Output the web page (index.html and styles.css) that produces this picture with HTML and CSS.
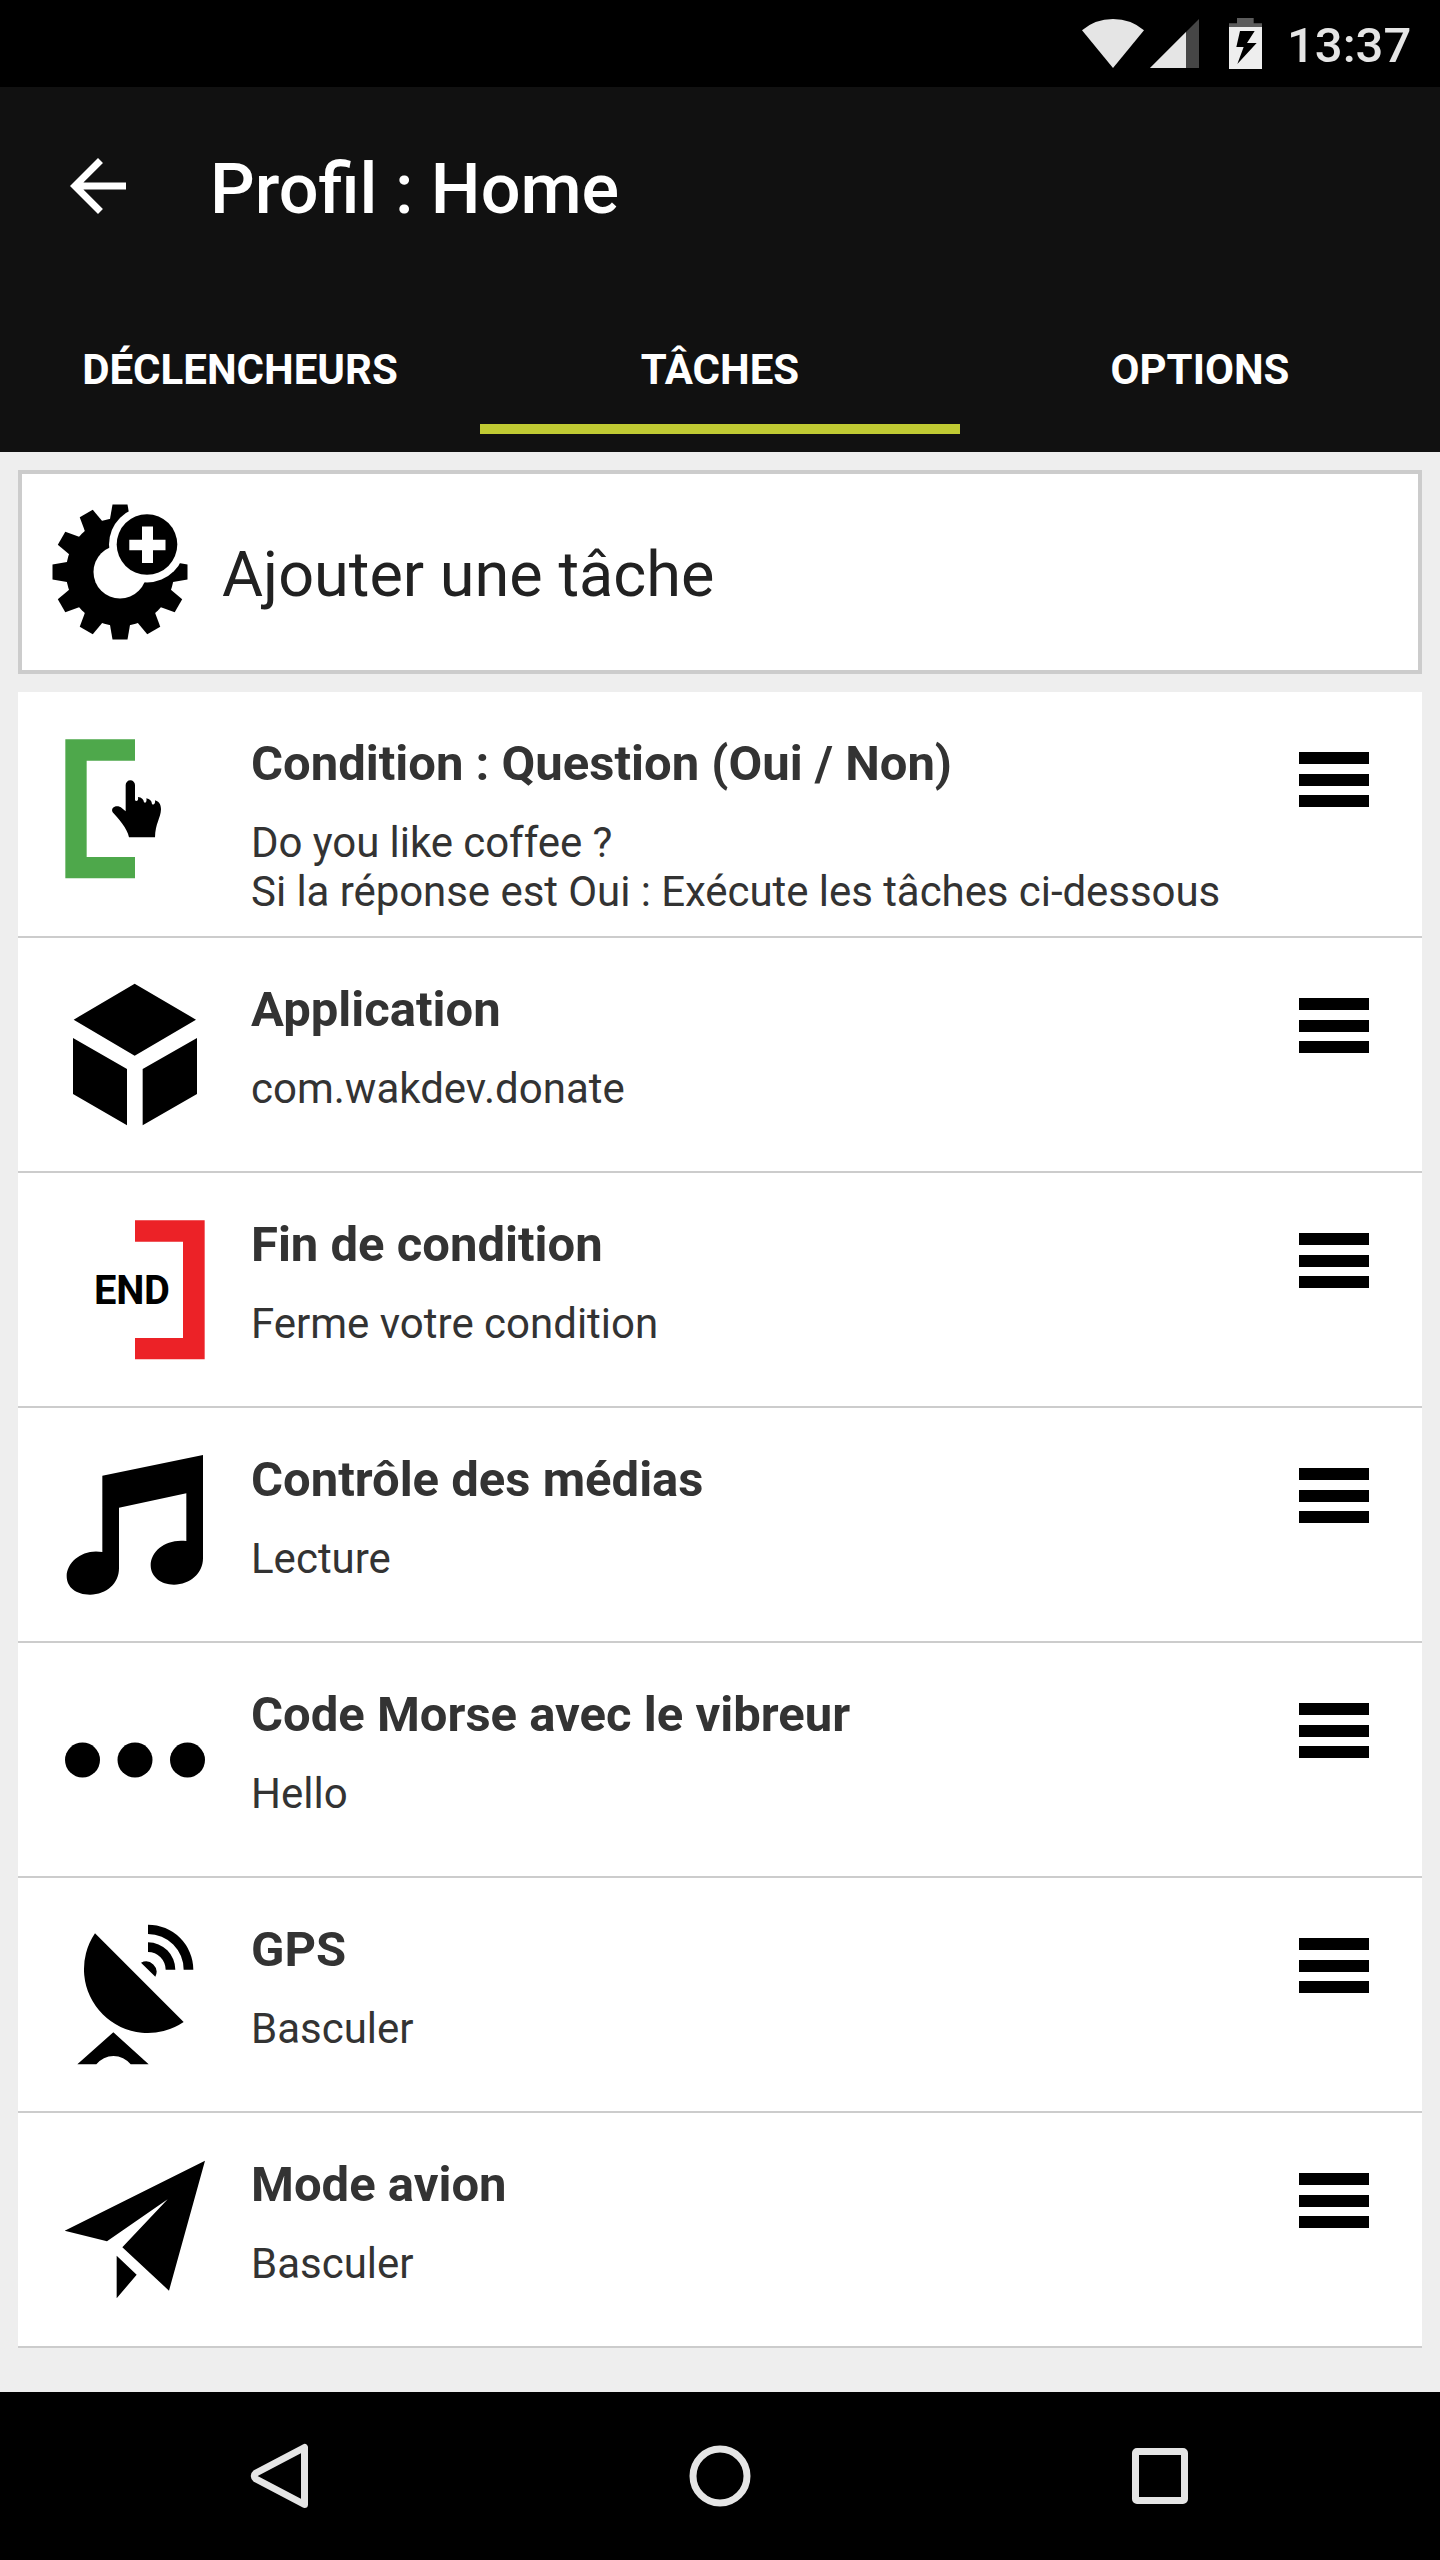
FILE: index.html
```html
<!DOCTYPE html>
<html lang="fr">
<head>
<meta charset="utf-8">
<title>Profil : Home</title>
<link rel="stylesheet" href="styles.css">
</head>
<body>
<div class="status-bar">
  <svg class="wifi" viewBox="66 57 186 147"><path d="M159 204 66 91Q105 57 159 57T252 91Z"/></svg>
  <svg class="signal" viewBox="270 57 147 147"><path class="dim" d="M270 204 417 57V204Z"/><path d="M270 204 378 96V204Z"/></svg>
  <svg class="battery" viewBox="507 54 99 153"><path class="cap" d="M507 81V70H531V54H581V70H606V81Z"/><path class="charge" d="M507 81H606V207H507Z"/><path class="bolt" d="M540 93H584L561 129H590L532 192 551 141H529Z"/></svg>
  <span class="clock">13:37</span>
</div>
<header class="app-bar">
  <div class="toolbar">
    <svg class="back" viewBox="0 0 24 24"><path d="M20 11H7.83l5.59-5.59L12 4l-8 8 8 8 1.41-1.41L7.83 13H20v-2z"/></svg>
    <h1 class="title">Profil : Home</h1>
  </div>
  <nav class="tabs">
    <span class="tab">DÉCLENCHEURS</span>
    <span class="tab active">TÂCHES</span>
    <span class="tab">OPTIONS</span>
  </nav>
</header>
<main class="content">
  <div class="add-card">
    <svg class="gear" viewBox="-70 -70 140 140">
      <defs><path id="tooth" d="M-10-50-10-53-7.5-67.5H7.5L10-53V-50Z"/></defs>
      <circle r="54"/>
      <use href="#tooth"/><use href="#tooth" transform="rotate(30)"/><use href="#tooth" transform="rotate(60)"/>
      <use href="#tooth" transform="rotate(90)"/><use href="#tooth" transform="rotate(120)"/><use href="#tooth" transform="rotate(150)"/>
      <use href="#tooth" transform="rotate(180)"/><use href="#tooth" transform="rotate(210)"/><use href="#tooth" transform="rotate(240)"/>
      <use href="#tooth" transform="rotate(270)"/><use href="#tooth" transform="rotate(300)"/><use href="#tooth" transform="rotate(330)"/>
      <circle class="cut" r="26.5"/>
      <circle class="cut" cx="27" cy="-27.5" r="38"/>
      <circle cx="27" cy="-27.5" r="30.3"/>
      <path class="cut" d="M22-45.5H33V-32.3H45.5V-21.8H33V-9H22V-21.8H9.3V-32.3H22Z"/>
    </svg>
    <span class="add-label">Ajouter une tâche</span>
  </div>
  <ul class="tasks">
    <li class="task task-tall">
      <svg class="icon" viewBox="75 117 420 420"><path class="green" d="M76 118H285V182H140V471H285V535H76Z"/><path d="M257 255A14 14 0 0 1 285 255V301C290 306 296 302 294 291 305 292 311 298 312 307 318 311 321 304 319 295 330 297 335 303 336 312 341 317 347 310 345 301 360 305 363 318 363 328 362 355 346 370 345 412H267C262 385 235 355 218 337 210 322 232 312 246 325L257 334Z"/></svg>
      <div class="text"><h2>Condition : Question (Oui / Non)</h2><p class="long">Do you like coffee ?<br>Si la réponse est Oui : Exécute les tâches ci-dessous</p></div>
      <span class="handle"><i></i><i></i><i></i></span>
    </li>
    <li class="task">
      <svg class="icon" viewBox="75 75 420 420"><path d="M284 71 468 179 284 287 101 179ZM99 234 261 327V496L99 402ZM471 234V402L308 496V327Z"/></svg>
      <div class="text"><h2>Application</h2><p>com.wakdev.donate</p></div>
      <span class="handle"><i></i><i></i><i></i></span>
    </li>
    <li class="task">
      <svg class="icon" viewBox="75 90 420 420"><path class="red" d="M285 91H494V508H285V444H429V155H285Z"/><text class="end" x="162" y="343" textLength="228">END</text></svg>
      <div class="text"><h2>Fin de condition</h2><p>Ferme votre condition</p></div>
      <span class="handle"><i></i><i></i><i></i></span>
    </li>
    <li class="task">
      <svg class="icon" viewBox="75 75 420 420"><path d="M187 137 489 75V385C489 430 450 464 402 464 362 464 332 440 332 406 332 362 380 325 439 333V190L237 233V415C237 460 200 494 150 494 108 494 80 472 80 438 80 395 130 355 187 366Z"/></svg>
      <div class="text"><h2>Contrôle des médias</h2><p>Lecture</p></div>
      <span class="handle"><i></i><i></i><i></i></span>
    </li>
    <li class="task">
      <svg class="icon" viewBox="0 0 140 140"><circle cx="17.5" cy="70" r="17.5"/><circle cx="70" cy="70" r="17.5"/><circle cx="122.5" cy="70" r="17.5"/></svg>
      <div class="text"><h2>Code Morse avec le vibreur</h2><p>Hello</p></div>
      <span class="handle"><i></i><i></i><i></i></span>
    </li>
    <li class="task">
      <svg class="icon" viewBox="75 105 420 420"><path d="M165 130 431 396A191.500 191.500 0 0 1 165 130ZM303 218A31.500 31.500 0 0 1 346 260ZM324 157A82 82 0 0 1 406 239H377A53 53 0 0 0 324 186ZM324 104A136 136 0 0 1 460 239H431A107 107 0 0 0 324 132ZM112 523 220 427 326 523H272A65.500 65.500 0 0 0 169 523Z"/></svg>
      <div class="text"><h2>GPS</h2><p>Basculer</p></div>
      <span class="handle"><i></i><i></i><i></i></span>
    </li>
    <li class="task">
      <svg class="icon" viewBox="75 90 420 420"><path d="M495 92 387 482 247 352 383 208 201 334 74 302ZM230 377 290 434 230 505Z"/></svg>
      <div class="text"><h2>Mode avion</h2><p>Basculer</p></div>
      <span class="handle"><i></i><i></i><i></i></span>
    </li>
  </ul>
</main>
<footer class="nav-bar">
  <svg class="key" viewBox="0 0 84 84"><path d="M66.500 13.500V70.500L18 45Q14.500 42 18 39Z"/></svg>
  <svg class="key" viewBox="0 0 84 84"><circle cx="42" cy="42" r="27"/></svg>
  <svg class="key" viewBox="0 0 84 84"><rect x="17.500" y="17.500" width="49" height="49" rx="1.500"/></svg>
</footer>
</body>
</html>
```
FILE: styles.css
```css
* { box-sizing: border-box; margin: 0; padding: 0; }
body {
  width: 1440px;
  height: 2560px;
  display: flex;
  flex-direction: column;
  background: #eee;
  font-family: Roboto, sans-serif;
  overflow: hidden;
}
svg { display: block; flex: none; overflow: visible; }

.status-bar {
  height: 87px;
  flex: none;
  display: flex;
  justify-content: flex-end;
  align-items: flex-start;
  background: #000;
  fill: #e5e5e5;
}
.wifi { width: 62px; height: 49px; margin: 19px 6px 0 0; }
.signal { width: 49px; height: 49px; margin: 19px 30px 0 0; }
.battery { width: 33px; height: 51px; margin: 18px 25px 0 0; }
.dim { fill: #464646; }
.cap { fill: #5c5c5c; }
.charge { fill: #eee; }
.bolt { fill: #000; }
.clock {
  width: 153px;
  margin-top: 17px;
  color: #e5e5e5;
  font-size: 49px;
  font-weight: 500;
  line-height: 58px;
}

.app-bar { height: 365px; flex: none; background: #111; color: #fff; }
.toolbar {
  height: 196px;
  display: flex;
  align-items: center;
  padding-left: 56px;
}
.back { width: 84px; height: 84px; fill: #fff; margin-top: 2px; }
.title { margin-left: 70px; font-size: 70.2px; font-weight: 500; line-height: 82px; margin-top: 7px; }
.tabs { height: 151px; display: grid; grid-template-columns: repeat(3, 480px); }
.tab {
  padding-top: 62px;
  text-align: center;
  font-size: 42px;
  font-weight: 700;
  line-height: 50px;
  border-bottom: 10px solid transparent;
}
.tab.active { border-bottom-color: #c0ca33; }

.content { flex: 1; padding: 18px; }
.add-card {
  height: 204px;
  display: flex;
  align-items: center;
  padding-left: 28px;
  background: #fff;
  border: 4px solid #ccc;
}
.gear { width: 140px; height: 140px; }
.cut { fill: #fff; }
.add-label { margin-left: 32px; font-size: 63px; line-height: 74px; color: #212121; padding-top: 5px; }

.tasks { margin-top: 18px; list-style: none; }
.task {
  height: 235px;
  display: flex;
  align-items: flex-start;
  padding: 0 53px 0 47px;
  background: #fff;
  border-bottom: 2px solid #ccc;
  color: #333;
}
.task-tall { height: 246px; }
.icon { width: 140px; height: 140px; margin-top: 47px; }
.green { fill: #4ea84b; }
.red { fill: #ec2227; }
.end { font-size: 119.5px; font-weight: 700; }
.text { flex: 1; margin-left: 46px; padding-top: 43px; white-space: nowrap; }
.text h2 { font-size: 49px; font-weight: 700; line-height: 58px; }
.text p { margin-top: 25px; font-size: 42px; line-height: 49px; }
.text .long { letter-spacing: -0.06px; }
.handle { width: 70px; margin-top: 60px; display: flex; flex-direction: column; gap: 9.500px; }
.handle i { height: 12px; background: #000; }

.nav-bar {
  height: 168px;
  flex: none;
  display: flex;
  justify-content: space-between;
  align-items: center;
  padding: 0 238px;
  background: #000;
}
.key { width: 84px; height: 84px; fill: none; stroke: #e5e5e5; stroke-width: 7; stroke-linejoin: round; }
```
